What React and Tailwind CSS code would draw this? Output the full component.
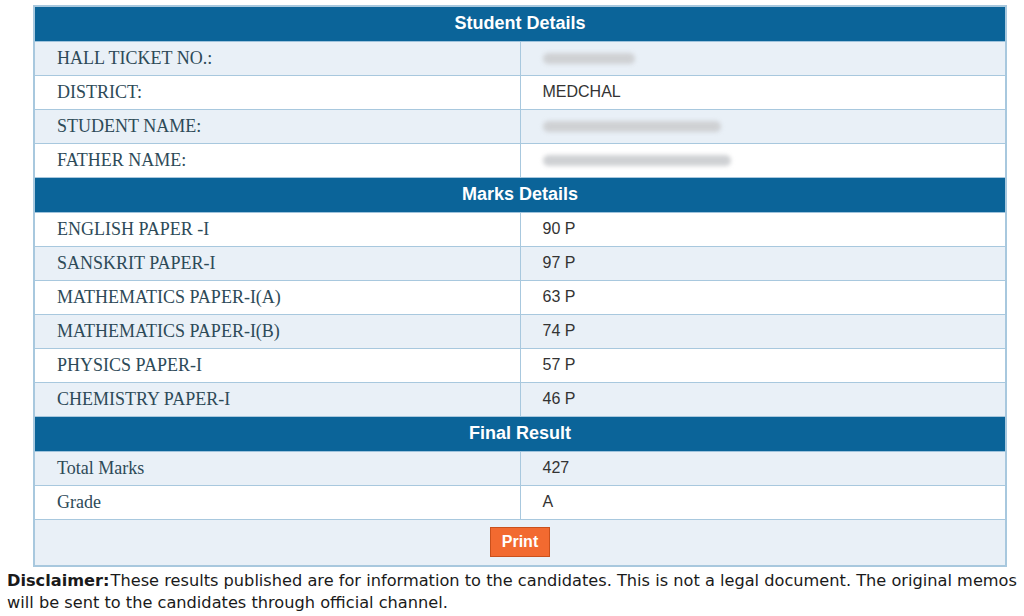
import React from "react";

const studentRows = [
  { label: "HALL TICKET NO.:", blur: "w-[92px]" },
  { label: "DISTRICT:", value: "MEDCHAL" },
  { label: "STUDENT NAME:", blur: "w-[178px]" },
  { label: "FATHER NAME:", blur: "w-[188px]" },
];

const marksRows = [
  { label: "ENGLISH PAPER -I", value: "90 P" },
  { label: "SANSKRIT PAPER-I", value: "97 P" },
  { label: "MATHEMATICS PAPER-I(A)", value: "63 P" },
  { label: "MATHEMATICS PAPER-I(B)", value: "74 P" },
  { label: "PHYSICS PAPER-I", value: "57 P" },
  { label: "CHEMISTRY PAPER-I", value: "46 P" },
];

const finalRows = [
  { label: "Total Marks", value: "427" },
  { label: "Grade", value: "A" },
];

const SectionHeader = ({ title }) => (
  <tr>
    <td
      colSpan={2}
      className="h-[35px] bg-[#0b6499] border border-[#9fc3dc] text-center text-white text-[18px] font-bold font-['Liberation_Sans',sans-serif]"
    >
      {title}
    </td>
  </tr>
);

const Row = ({ row, shaded }) => (
  <tr className={shaded ? "bg-[#e9f0f7]" : "bg-white"}>
    <td className="h-[34px] w-[486px] border border-[#a8c8de] pl-[22px] text-[18px] text-[#2d4a58] font-['Liberation_Serif',serif]">
      {row.label}
    </td>
    <td className="h-[34px] border border-[#a8c8de] pl-[22px] text-[16px] text-[#333] font-['Liberation_Sans',sans-serif]">
      {row.value ? (
        row.value
      ) : (
        <div className={`h-[11px] ${row.blur} rounded-full bg-[#cfd1d4] blur-[2px]`} />
      )}
    </td>
  </tr>
);

export default function App() {
  return (
    <div className="w-[1024px] h-[616px] bg-white overflow-hidden">
      <div className="pt-[5px] pl-[33px] w-[1007px]">
        <table className="w-full border-collapse border-2 border-[#a8c8de]">
          <tbody>
            <SectionHeader title="Student Details" />
            {studentRows.map((r, i) => (
              <Row key={r.label} row={r} shaded={i % 2 === 0} />
            ))}
            <SectionHeader title="Marks Details" />
            {marksRows.map((r, i) => (
              <Row key={r.label} row={r} shaded={i % 2 === 1} />
            ))}
            <SectionHeader title="Final Result" />
            {finalRows.map((r, i) => (
              <Row key={r.label} row={r} shaded={i % 2 === 0} />
            ))}
            <tr className="bg-[#e9f0f7]">
              <td colSpan={2} className="h-[47px] border border-[#a8c8de] text-center">
                <button className="inline-flex items-center justify-center w-[60px] h-[30px] bg-[#f26a30] border border-[#c9501c] text-white text-[16px] font-bold font-['Liberation_Sans',sans-serif]">
                  Print
                </button>
              </td>
            </tr>
          </tbody>
        </table>
      </div>
      <p className="mt-[3px] pl-[7px] text-[16.2px] leading-[22px] text-[#1a1a1a] font-['DejaVu_Sans',sans-serif]">
        <span className="font-bold mr-[1px]">Disclaimer:</span>These results published are for information to the candidates. This is not a legal document. The original memos will be sent to the candidates through official channel.
      </p>
    </div>
  );
}
